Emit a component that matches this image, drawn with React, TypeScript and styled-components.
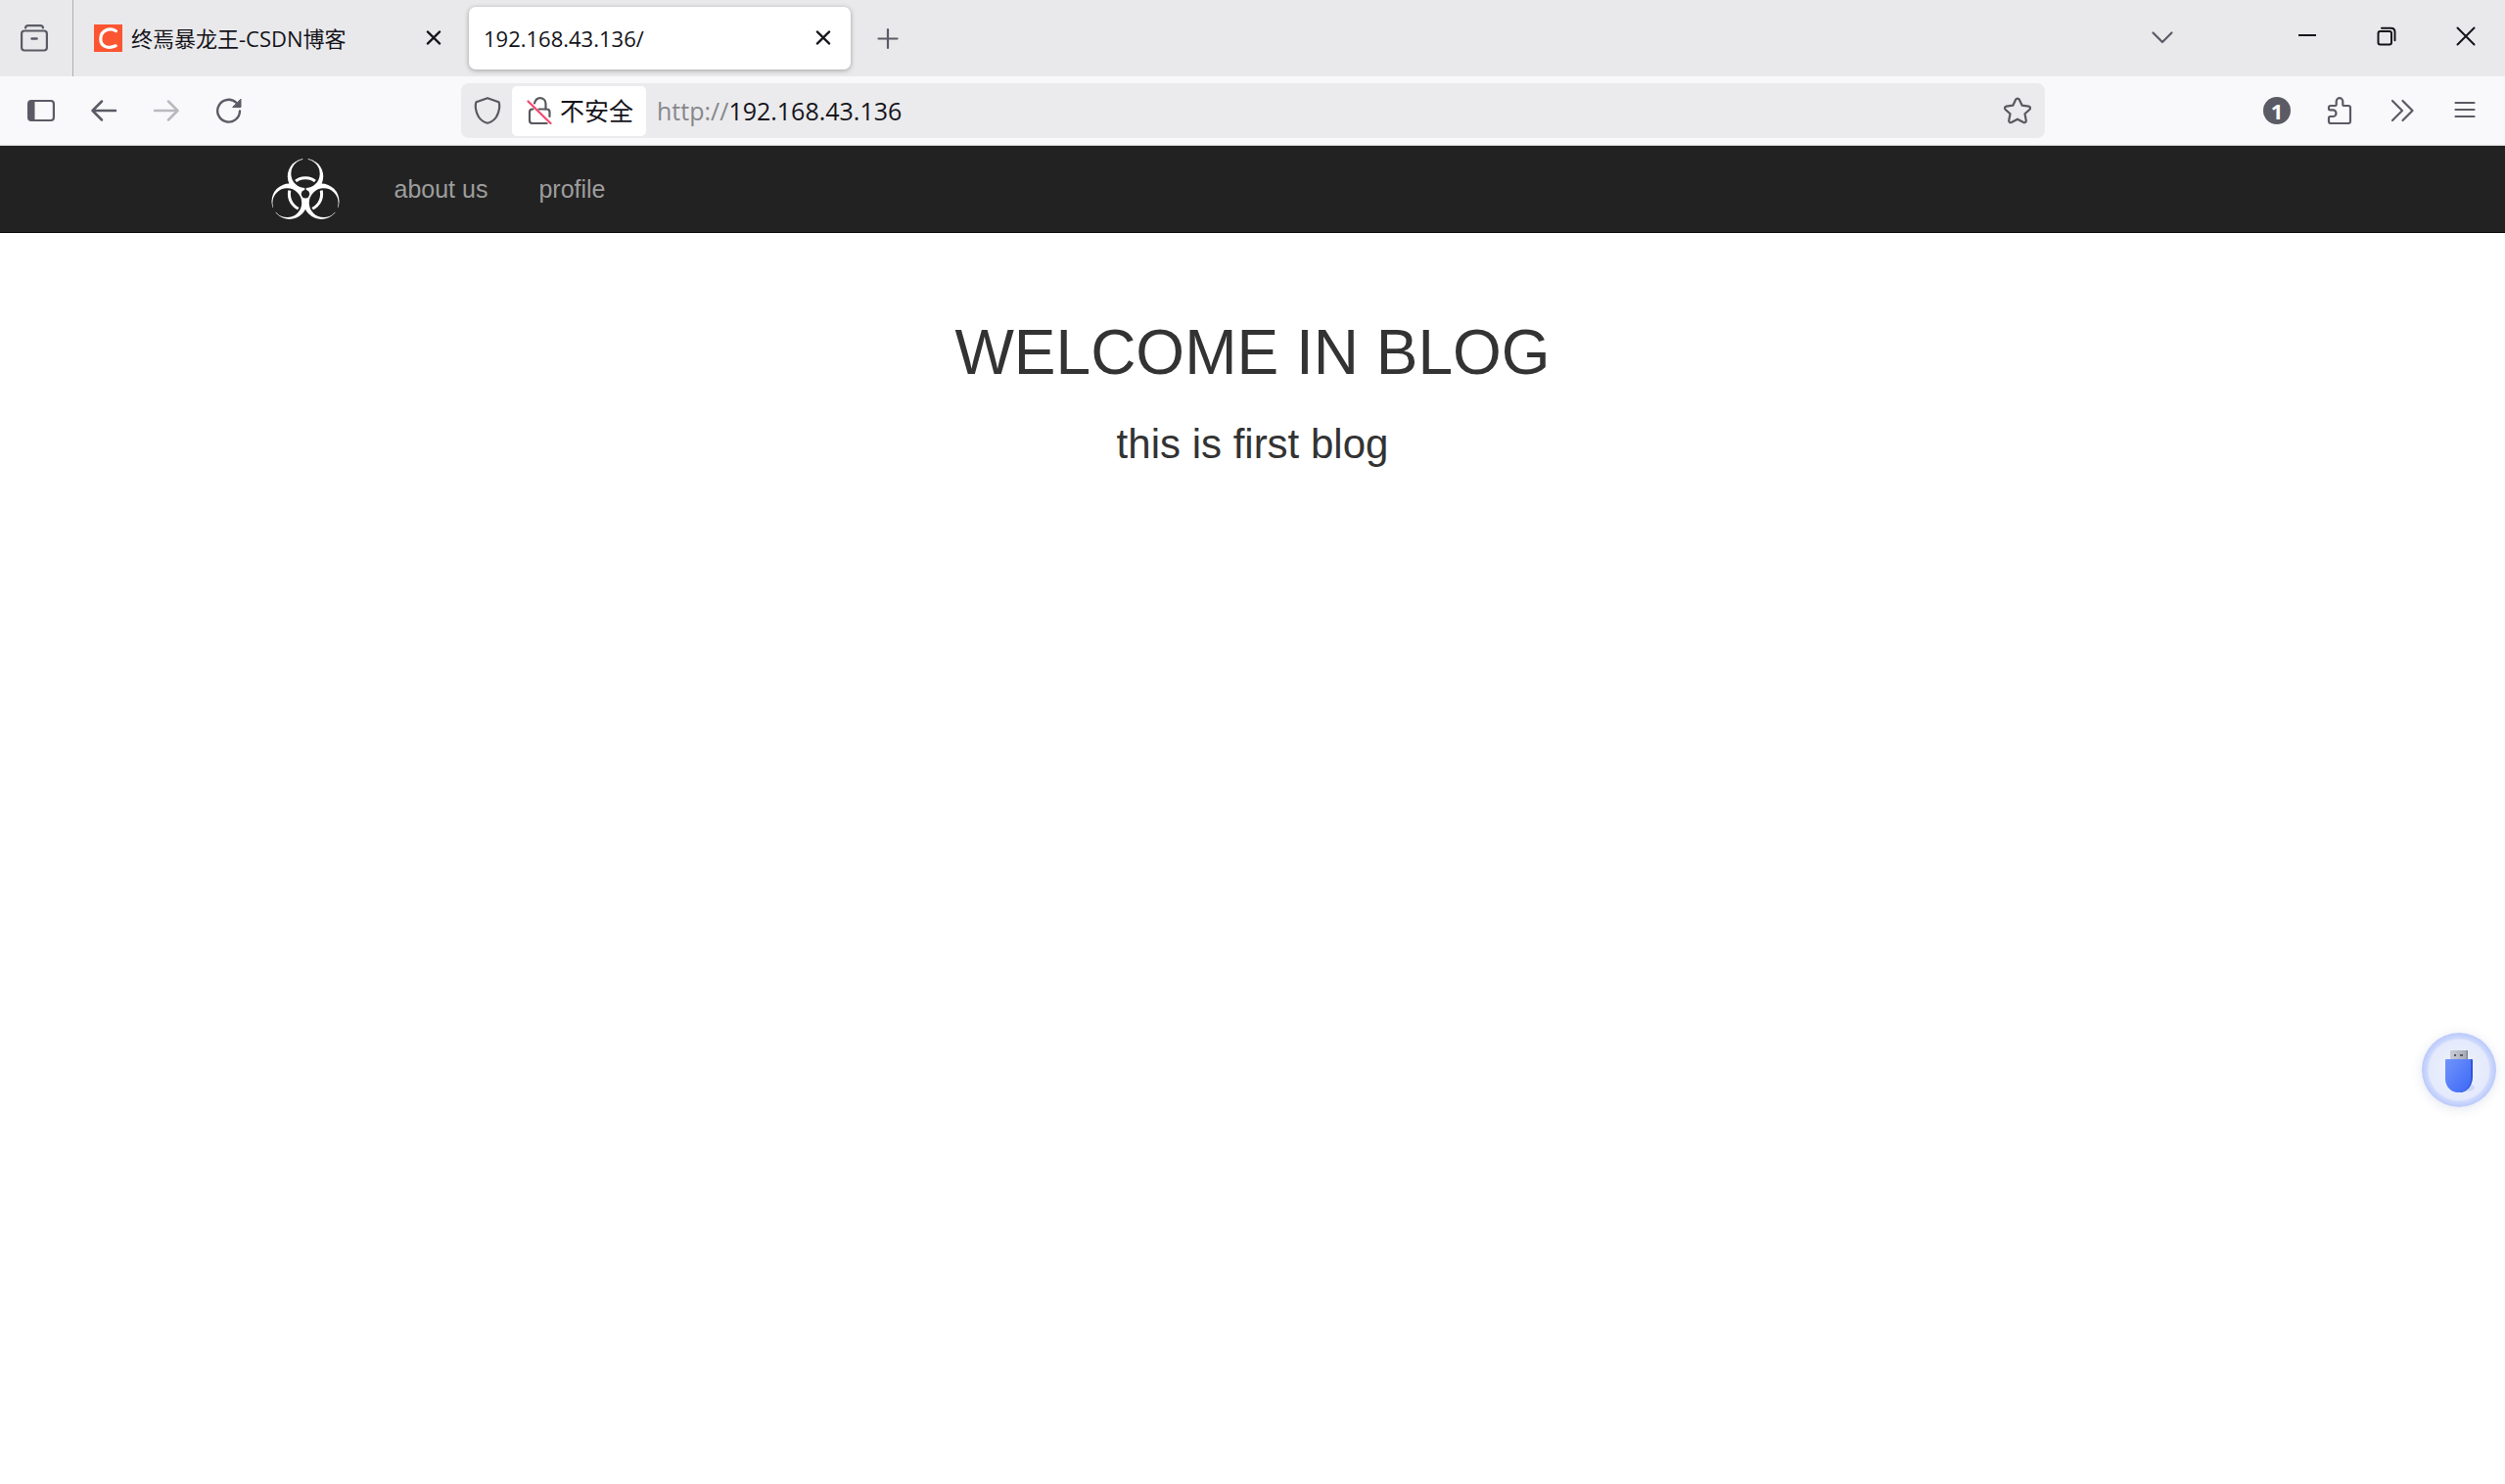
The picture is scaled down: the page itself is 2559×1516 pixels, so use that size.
import React, { useState } from "react";
import styled, { createGlobalStyle } from "styled-components";

const uiFont = `"Open Sans", "Noto Sans CJK SC", sans-serif`;
const pageFont = `"Liberation Sans", Arial, sans-serif`;

const GlobalStyle = createGlobalStyle`
  *, *::before, *::after { box-sizing: border-box; }
  body { margin: 0; background: #fff; font-family: ${pageFont}; }
  button { font: inherit; color: inherit; background: none; border: 0; padding: 0; }
`;

const TabBar = styled.header`
  display: flex;
  align-items: center;
  height: 78px;
  background: #e9e9eb;
  color: #15141a;
  font-family: ${uiFont};
`;

const RecentButton = styled.button`
  display: grid;
  place-items: center;
  flex: none;
  width: 75px;
  height: 100%;
  padding-right: 4px;
  border-right: 1px solid #aeaeb2;
  color: #5b5b66;
`;

const Tabs = styled.nav`
  display: flex;
  gap: 8px;
  padding-left: 6px;
  min-width: 0;
`;

const Tab = styled.div<{ $active?: boolean }>`
  display: flex;
  align-items: center;
  gap: 9px;
  width: 390px;
  height: 64px;
  padding: 0 14px 0 15px;
  border-radius: 7px;
  background: ${(p) => (p.$active ? "#fff" : "transparent")};
  box-shadow: ${(p) => (p.$active ? "0 1px 5px rgba(0, 0, 0, 0.32)" : "none")};
`;

const TabTitle = styled.button`
  flex: 1;
  min-width: 0;
  overflow: hidden;
  white-space: nowrap;
  text-align: left;
  font-size: 22px;
  line-height: 32px;
`;

const TabClose = styled.button`
  display: grid;
  place-items: center;
  width: 28px;
  height: 28px;
`;

const IconButton = styled.button<{ $faded?: boolean }>`
  display: grid;
  place-items: center;
  flex: none;
  width: 56px;
  height: 56px;
  color: #5b5b66;
  opacity: ${(p) => (p.$faded ? 0.4 : 1)};
`;

const NewTab = styled(IconButton)`
  margin-left: 10px;
`;

const AllTabs = styled(IconButton)`
  margin: 0 79px 0 auto;
`;

const WindowControls = styled.div`
  display: flex;
  align-self: flex-start;
`;

const WindowButton = styled.button`
  display: grid;
  place-items: center;
  width: 81px;
  height: 74px;
`;

const Toolbar = styled.div`
  display: grid;
  grid-template-columns: 1fr minmax(0, 1618px) 1fr;
  align-items: center;
  height: 71px;
  padding: 0 13px 0 14px;
  background: #f9f9fb;
  border-bottom: 1px solid #cfcfd3;
  font-family: ${uiFont};
`;

const ToolGroup = styled.div<{ $end?: boolean }>`
  display: flex;
  gap: 8px;
  justify-content: ${(p) => (p.$end ? "flex-end" : "flex-start")};
`;

const AddressBar = styled.form`
  display: flex;
  align-items: center;
  height: 56px;
  padding-right: 14px;
  border-radius: 8px;
  background: #ebebed;
  font-size: 25px;
  line-height: 36px;
  color: #15141a;
`;

const AddressIcon = styled.button`
  display: grid;
  place-items: center;
  flex: none;
  width: 52px;
  height: 52px;
  padding-left: 2px;
  color: #58585e;
`;

const StarButton = styled(AddressIcon)`
  width: 28px;
  padding-left: 0;
`;

const Security = styled.button`
  display: flex;
  align-items: center;
  flex: none;
  gap: 7px;
  height: 51px;
  padding: 0 13px 0 14px;
  border-radius: 5px;
  background: #fff;
  white-space: nowrap;
`;

const Scheme = styled.label`
  margin-left: 11px;
  color: #87878b;
`;

const AddressInput = styled.input`
  flex: 1;
  min-width: 0;
  padding: 0;
  border: 0;
  outline: 0;
  background: transparent;
  font: inherit;
  color: inherit;
`;

const CountBadge = styled.span`
  display: grid;
  place-items: center;
  width: 28px;
  height: 28px;
  border-radius: 50%;
  background: #5b5b66;
  color: #fff;
  font-size: 22px;
  font-weight: 700;
  line-height: 28px;
`;

const SiteNav = styled.nav`
  background: #222;
  border-bottom: 1px solid #080808;
`;

const SiteContainer = styled.div`
  display: flex;
  align-items: center;
  max-width: 2048px;
  height: 88px;
  margin: 0 auto;
  padding-left: 21px;
`;

const Brand = styled.a`
  display: block;
  height: 62px;
  margin-right: 30px;
  color: #fff;
`;

const SiteLink = styled.a`
  padding: 0 26px;
  color: #9d9d9d;
  font-size: 25px;
  line-height: 36px;
  text-decoration: none;
`;

const Main = styled.main`
  padding-top: 86px;
  text-align: center;
  color: #333;
`;

const Title = styled.h1`
  margin: 0 0 34px;
  font-size: 64px;
  font-weight: 400;
  line-height: 72px;
`;

const Subtitle = styled.h3`
  margin: 0;
  font-size: 42px;
  font-weight: 400;
  line-height: 48px;
`;

const DriveButton = styled.button`
  position: fixed;
  right: 9px;
  top: 1055px;
  display: grid;
  place-items: center;
  width: 76px;
  height: 76px;
  padding-top: 4px;
  border-radius: 50%;
  background: radial-gradient(circle, #f0f3fc 0%, #e4eafc 78%, #cbd7fc 86%, #bccbfb 100%);
  background: radial-gradient(circle closest-side, #f0f3fc 0%, #e4eafc 80%, #cdd8fc 86%, #b9c9fb 100%);
  box-shadow: 0 2px 12px rgba(60, 80, 140, 0.14);
`;

type IconProps = {
  size?: number;
  width?: number;
  children: React.ReactNode;
};

/* 28-unit grid, one unit per pixel at the default size */
function Icon({ size = 28, width = 2.2, children }: IconProps) {
  return (
    <svg
      width={size}
      height={size}
      viewBox="0 0 28 28"
      fill="none"
      stroke="currentColor"
      strokeWidth={width}
      strokeLinecap="round"
      strokeLinejoin="round"
      aria-hidden="true"
    >
      {children}
    </svg>
  );
}

function CloseIcon() {
  return (
    <Icon>
      <path d="M7.8 7.4 20.2 19.6M20.2 7.4 7.8 19.6" />
    </Icon>
  );
}

function Favicon() {
  return (
    <svg width="29" height="28" viewBox="0 0 29 28" aria-hidden="true">
      <rect width="29" height="28" fill="#fc5531" />
      <path
        d="M22.4 6.6C15.6 2.6 6.8 6.4 6.8 14.8c0 8 8 10.5 15.4 7"
        fill="none"
        stroke="#fff"
        strokeWidth="3.2"
        strokeLinecap="round"
      />
    </svg>
  );
}

function Biohazard() {
  return (
    <svg width="70" height="62" viewBox="17.5 12 70 62" role="img" aria-label="home">
      <defs>
        <mask id="lobes" maskUnits="userSpaceOnUse" x="0" y="0" width="110" height="90">
          <g fill="#fff">
            <circle cx="52.5" cy="30.2" r="18.2" />
            <circle cx="36.2" cy="55.7" r="18.2" />
            <circle cx="68.8" cy="55.7" r="18.2" />
          </g>
          <g fill="#000">
            <circle cx="52.5" cy="27.4" r="14.7" />
            <circle cx="33.8" cy="57.2" r="14.9" />
            <circle cx="71.2" cy="57.2" r="14.9" />
            <circle cx="52.5" cy="48.3" r="4.2" />
          </g>
          <g stroke="#000">
            <path d="M52.5 8V18" strokeWidth="5.5" />
            <path d="M15 67.5 24 62.5M90 67.5 81 62.5" strokeWidth="5.5" />
            <path d="M52.5 40V48" strokeWidth="1.4" />
          </g>
        </mask>
        <mask id="arcs" maskUnits="userSpaceOnUse" x="0" y="0" width="110" height="90">
          <g fill="#fff">
            <circle cx="52.5" cy="27.4" r="12.6" />
            <circle cx="33.8" cy="57.2" r="13" />
            <circle cx="71.2" cy="57.2" r="13" />
          </g>
        </mask>
      </defs>
      <rect width="110" height="90" fill="currentColor" mask="url(#lobes)" />
      <circle
        cx="52.5"
        cy="48.3"
        r="16.6"
        fill="none"
        stroke="currentColor"
        strokeWidth="3"
        mask="url(#arcs)"
      />
    </svg>
  );
}

function UsbDrive() {
  return (
    <svg width="34" height="46" viewBox="0 0 34 46" aria-hidden="true">
      <defs>
        <linearGradient id="shell" x1="0" y1="0" x2="1" y2="1">
          <stop offset="0" stopColor="#7194fb" />
          <stop offset="1" stopColor="#3c68f6" />
        </linearGradient>
        <linearGradient id="plug" x1="0" y1="0" x2="1" y2="0">
          <stop offset="0" stopColor="#c9ccd6" />
          <stop offset="1" stopColor="#a4a8b4" />
        </linearGradient>
      </defs>
      <ellipse cx="24" cy="39" rx="9" ry="4" fill="#b9c8f5" opacity="0.6" />
      <rect x="8" y="1" width="18" height="11" rx="1" fill="url(#plug)" />
      <rect x="24.5" y="1" width="1.5" height="11" fill="#858996" />
      <path d="M12 5h2v2h-2zM18 5h3v2h-3z" fill="#555a66" />
      <path d="M5 10h25a1 1 0 0 1 1 1v17c0 9-6 16-13 16z" fill="#2d55d8" />
      <path d="M4 10h24a1 1 0 0 1 1 1v19c0 8-6 14-13 14S3 38 3 30V11a1 1 0 0 1 1-1z" fill="url(#shell)" />
    </svg>
  );
}

export default function App() {
  const [address, setAddress] = useState("192.168.43.136");

  return (
    <>
      <GlobalStyle />
      <TabBar>
        <RecentButton aria-label="Recent browsing">
          <Icon>
            <path d="M5 3.5C5.3 1.8 6 1.200 7.8 1.200h12.400c1.800 0 2.500.6 2.800 2.300" />
            <rect x="1.100" y="6.500" width="25.800" height="20" rx="3" />
            <path d="M11.500 14.500h5" strokeWidth="2.500" />
          </Icon>
        </RecentButton>
        <Tabs aria-label="Tabs">
          <Tab>
            <Favicon />
            <TabTitle>终焉暴龙王-CSDN博客</TabTitle>
            <TabClose aria-label="Close tab">
              <CloseIcon />
            </TabClose>
          </Tab>
          <Tab $active>
            <TabTitle>192.168.43.136/</TabTitle>
            <TabClose aria-label="Close tab">
              <CloseIcon />
            </TabClose>
          </Tab>
        </Tabs>
        <NewTab aria-label="New tab">
          <Icon>
            <path d="M14 5v19M4.500 14.500h19" />
          </Icon>
        </NewTab>
        <AllTabs aria-label="List all tabs">
          <Icon>
            <path d="M4.500 8.500 14 18l9.500-9.500" />
          </Icon>
        </AllTabs>
        <WindowControls>
          <WindowButton aria-label="Minimize">
            <Icon width={2}>
              <path d="M5 13h18" strokeLinecap="butt" />
            </Icon>
          </WindowButton>
          <WindowButton aria-label="Restore">
            <Icon width={2}>
              <rect x="5.500" y="9" width="13.500" height="13.500" rx="2" />
              <path d="M9 5.800h9.500c2.500 0 4 1.500 4 4v8.500" />
            </Icon>
          </WindowButton>
          <WindowButton aria-label="Close window">
            <Icon width={2}>
              <path d="M5.500 5.500l17 17M22.500 5.500l-17 17" />
            </Icon>
          </WindowButton>
        </WindowControls>
      </TabBar>

      <Toolbar>
        <ToolGroup>
          <IconButton aria-label="Sidebar">
            <Icon>
              <rect x="1.100" y="4" width="25.800" height="20" rx="3" />
              <path d="M2 5h5v18H2z" fill="currentColor" strokeWidth="1" />
            </Icon>
          </IconButton>
          <IconButton aria-label="Back">
            <Icon width={2.5}>
              <path d="M26 14H2.500M12 4.500 2.500 14 12 23.500" />
            </Icon>
          </IconButton>
          <IconButton aria-label="Forward" $faded>
            <Icon width={2.5}>
              <path d="M2 14h23.500M16 4.500l9.500 9.500L16 23.500" />
            </Icon>
          </IconButton>
          <IconButton aria-label="Reload">
            <Icon width={2.4}>
              <path d="M25 14.500A11.400 11.400 0 1 1 21.500 6" />
              <path d="M26 2.500v8h-8z" fill="currentColor" strokeWidth="1" />
            </Icon>
          </IconButton>
        </ToolGroup>

        <AddressBar onSubmit={(e) => e.preventDefault()}>
          <AddressIcon type="button" aria-label="Tracking protection">
            <Icon>
              <path d="M14 1.200 25.500 5.200C27 9 26 15.500 23 20.500c-2.300 3.500-5.500 5.500-9 6.300-3.500-.8-6.700-2.800-9-6.300C2 15.500 1 9 2.500 5.200z" />
            </Icon>
          </AddressIcon>
          <Security type="button">
            <Icon>
              <g stroke="#58585e">
                <path d="M9 6.500C10 3 12 1.200 14.500 1.200 18 1.200 20.500 3.500 20.500 7v5.500h1c2 0 3 1 3 3V20" />
                <path d="M7.500 12.500H7c-2 0-3 1-3 3V24c0 2 1 3 3 3h14.500" />
                <path d="M13.500 12.500h7" />
              </g>
              <path d="M2.500 4.500 25.500 27" stroke="#f5476f" />
            </Icon>
            不安全
          </Security>
          <Scheme htmlFor="address">http://</Scheme>
          <AddressInput
            id="address"
            value={address}
            onChange={(e) => setAddress(e.target.value)}
          />
          <StarButton type="button" aria-label="Bookmark this page">
            <Icon>
              <path d="M12.300 2.500c.7-1.300 2.700-1.300 3.400 0l3 6.200 6.800.9c1.500.3 2 2 1 3.100l-5 4.600 1.300 6.800c.2 1.600-1.300 2.600-2.700 1.900L14 22.700l-6.100 3.300c-1.400.7-2.900-.3-2.700-1.900l1.300-6.800-5-4.600c-1-1.100-.5-2.800 1-3.100l6.800-.9z" />
            </Icon>
          </StarButton>
        </AddressBar>

        <ToolGroup $end>
          <IconButton aria-label="Notifications">
            <CountBadge>1</CountBadge>
          </IconButton>
          <IconButton aria-label="Extensions">
            <Icon>
              <path d="M5 9h4c1 0 1.700-.6 1.700-1.600V4.500a3.300 3.300 0 0 1 6.600 0v2.900c0 1 .7 1.600 1.700 1.600h4c1.300 0 2 .7 2 2v14c0 1.300-.7 2-2 2H5c-1.300 0-2-.7-2-2v-3.600c0-1 .6-1.400 1.500-1.400h2.700a3.300 3.300 0 0 0 0-6.600H4.500c-.9 0-1.500-.4-1.500-1.400v-1c0-1.300.7-2 2-2z" />
            </Icon>
          </IconButton>
          <IconButton aria-label="More tools">
            <Icon>
              <path d="M4 4l10 10L4 24M14.500 4l10 10-10 10" />
            </Icon>
          </IconButton>
          <IconButton aria-label="Application menu">
            <Icon>
              <path d="M4.500 6h19M4.500 13h19M4.500 20h19" />
            </Icon>
          </IconButton>
        </ToolGroup>
      </Toolbar>

      <SiteNav>
        <SiteContainer>
          <Brand href="#">
            <Biohazard />
          </Brand>
          <SiteLink href="#about">about us</SiteLink>
          <SiteLink href="#profile">profile</SiteLink>
        </SiteContainer>
      </SiteNav>

      <Main>
        <Title>WELCOME IN BLOG</Title>
        <Subtitle>this is first blog</Subtitle>
      </Main>

      <DriveButton aria-label="USB drive">
        <UsbDrive />
      </DriveButton>
    </>
  );
}
